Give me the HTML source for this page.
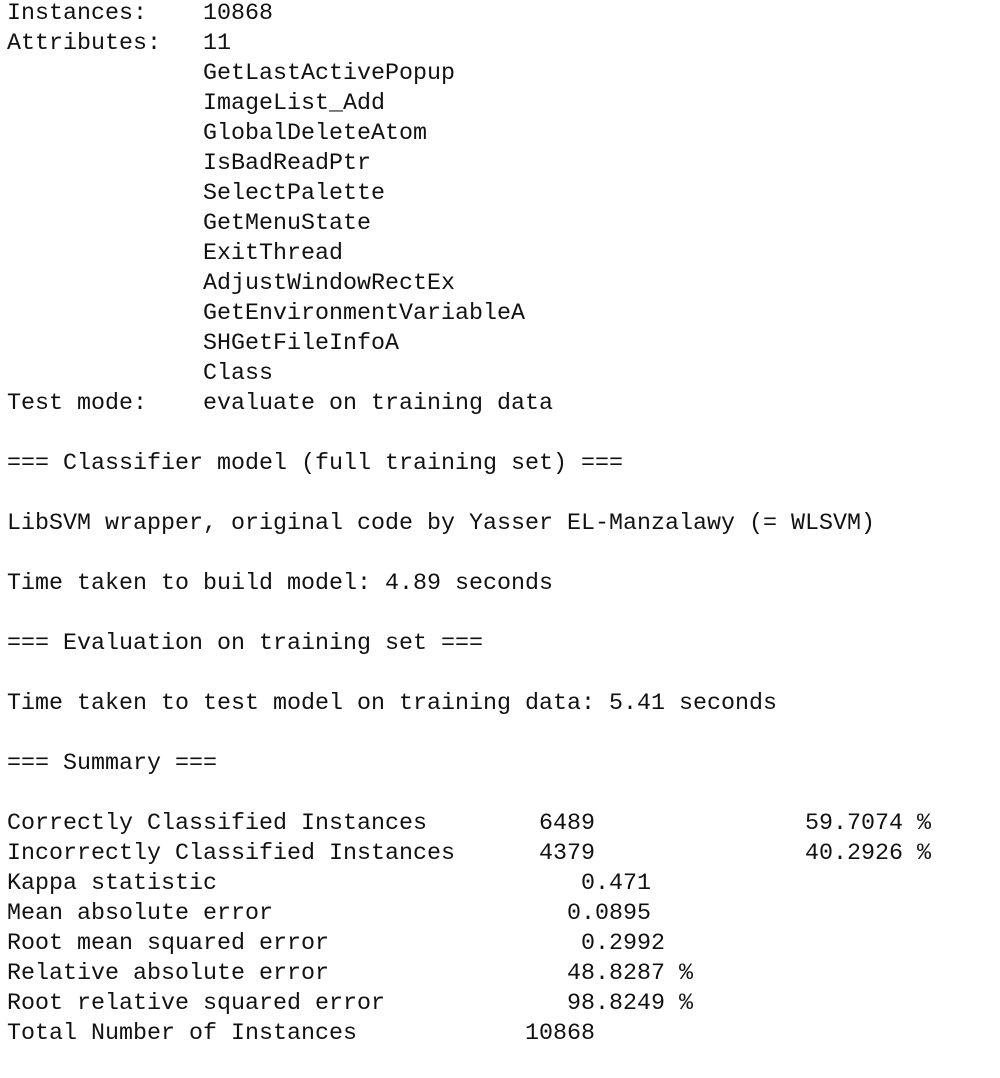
<!DOCTYPE html>
<html><head><meta charset="utf-8"><style>
html,body{margin:0;padding:0;background:#fff;width:1000px;height:1078px;overflow:hidden}
pre{margin:0;position:absolute;left:7px;top:-1px;font-family:"Liberation Mono",monospace;font-size:23.33px;line-height:30px;color:#111}
</style></head><body><pre>Instances:    10868
Attributes:   11
              GetLastActivePopup
              ImageList_Add
              GlobalDeleteAtom
              IsBadReadPtr
              SelectPalette
              GetMenuState
              ExitThread
              AdjustWindowRectEx
              GetEnvironmentVariableA
              SHGetFileInfoA
              Class
Test mode:    evaluate on training data

=== Classifier model (full training set) ===

LibSVM wrapper, original code by Yasser EL-Manzalawy (= WLSVM)

Time taken to build model: 4.89 seconds

=== Evaluation on training set ===

Time taken to test model on training data: 5.41 seconds

=== Summary ===

Correctly Classified Instances        6489               59.7074 %
Incorrectly Classified Instances      4379               40.2926 %
Kappa statistic                          0.471
Mean absolute error                     0.0895
Root mean squared error                  0.2992
Relative absolute error                 48.8287 %
Root relative squared error             98.8249 %
Total Number of Instances            10868     
</pre></body></html>
